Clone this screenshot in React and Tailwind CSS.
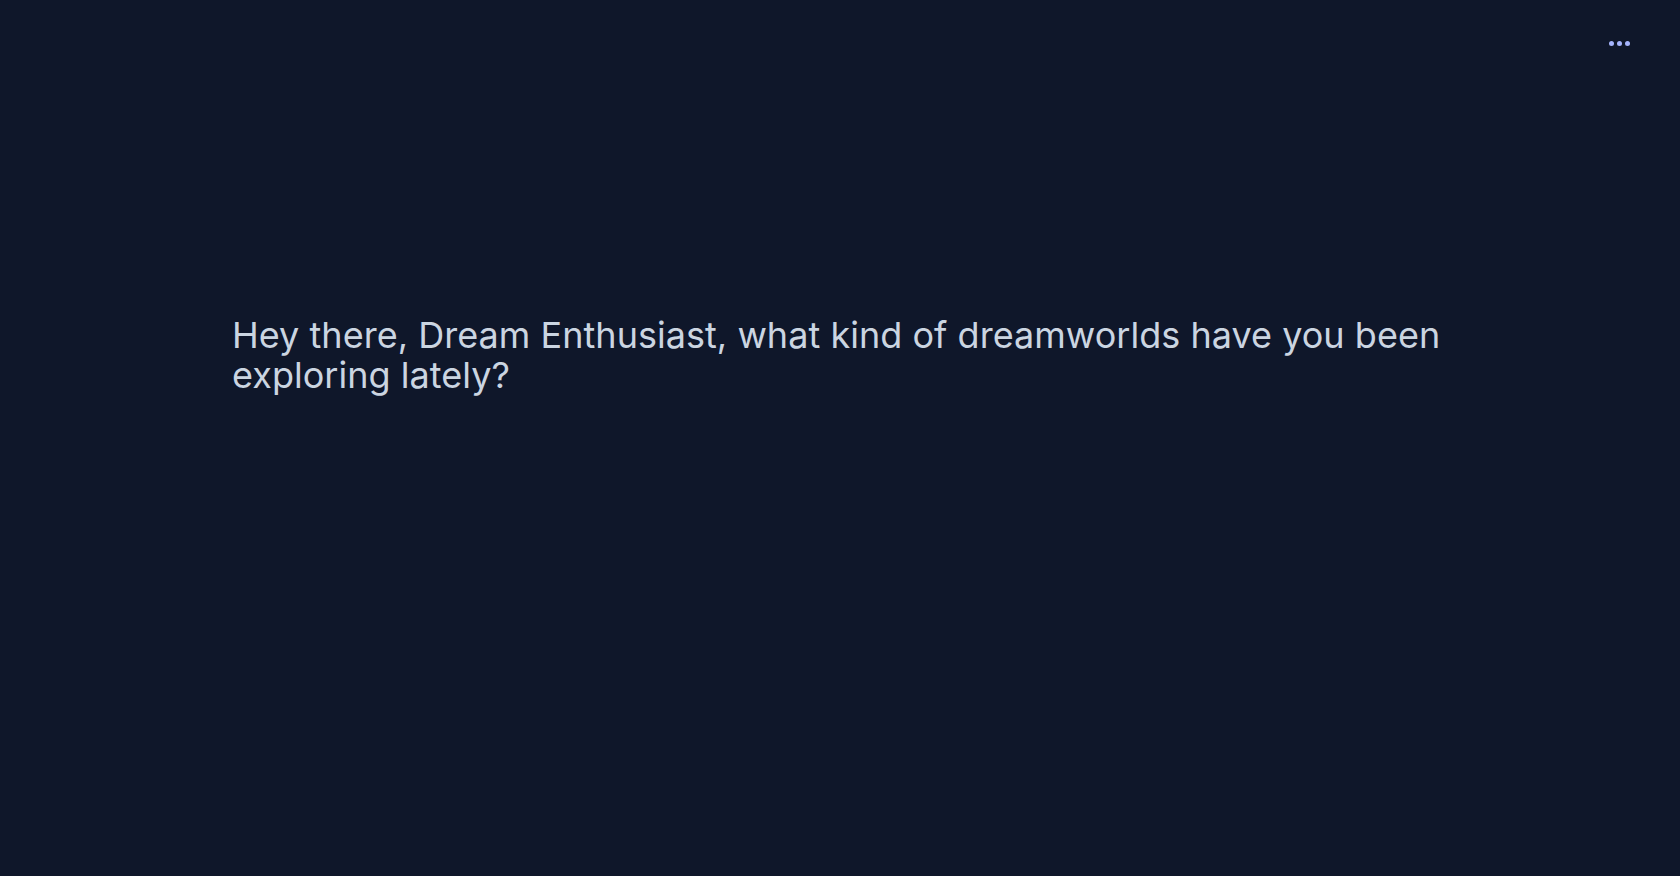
export default function App() {
  return (
    <div className="min-h-screen w-full bg-[#0f172a]" style={{ fontFamily: 'Inter, "Noto Sans", sans-serif' }}>
      <div className="flex justify-end pr-[50px] pt-[41px]">
        <div className="flex items-center gap-[3px]">
          <span className="block h-[5px] w-[5px] rounded-full bg-[#a5b4fc]" />
          <span className="block h-[5px] w-[5px] rounded-full bg-[#a5b4fc]" />
          <span className="block h-[5px] w-[5px] rounded-full bg-[#a5b4fc]" />
        </div>
      </div>
      <div className="mx-auto max-w-7xl px-8 pt-[269px]">
        <p className="text-4xl tracking-[0.03px] text-[#cbd5e1]">
          Hey there, Dream Enthusiast, what kind of dreamworlds have you been exploring lately?
        </p>
      </div>
    </div>
  );
}
